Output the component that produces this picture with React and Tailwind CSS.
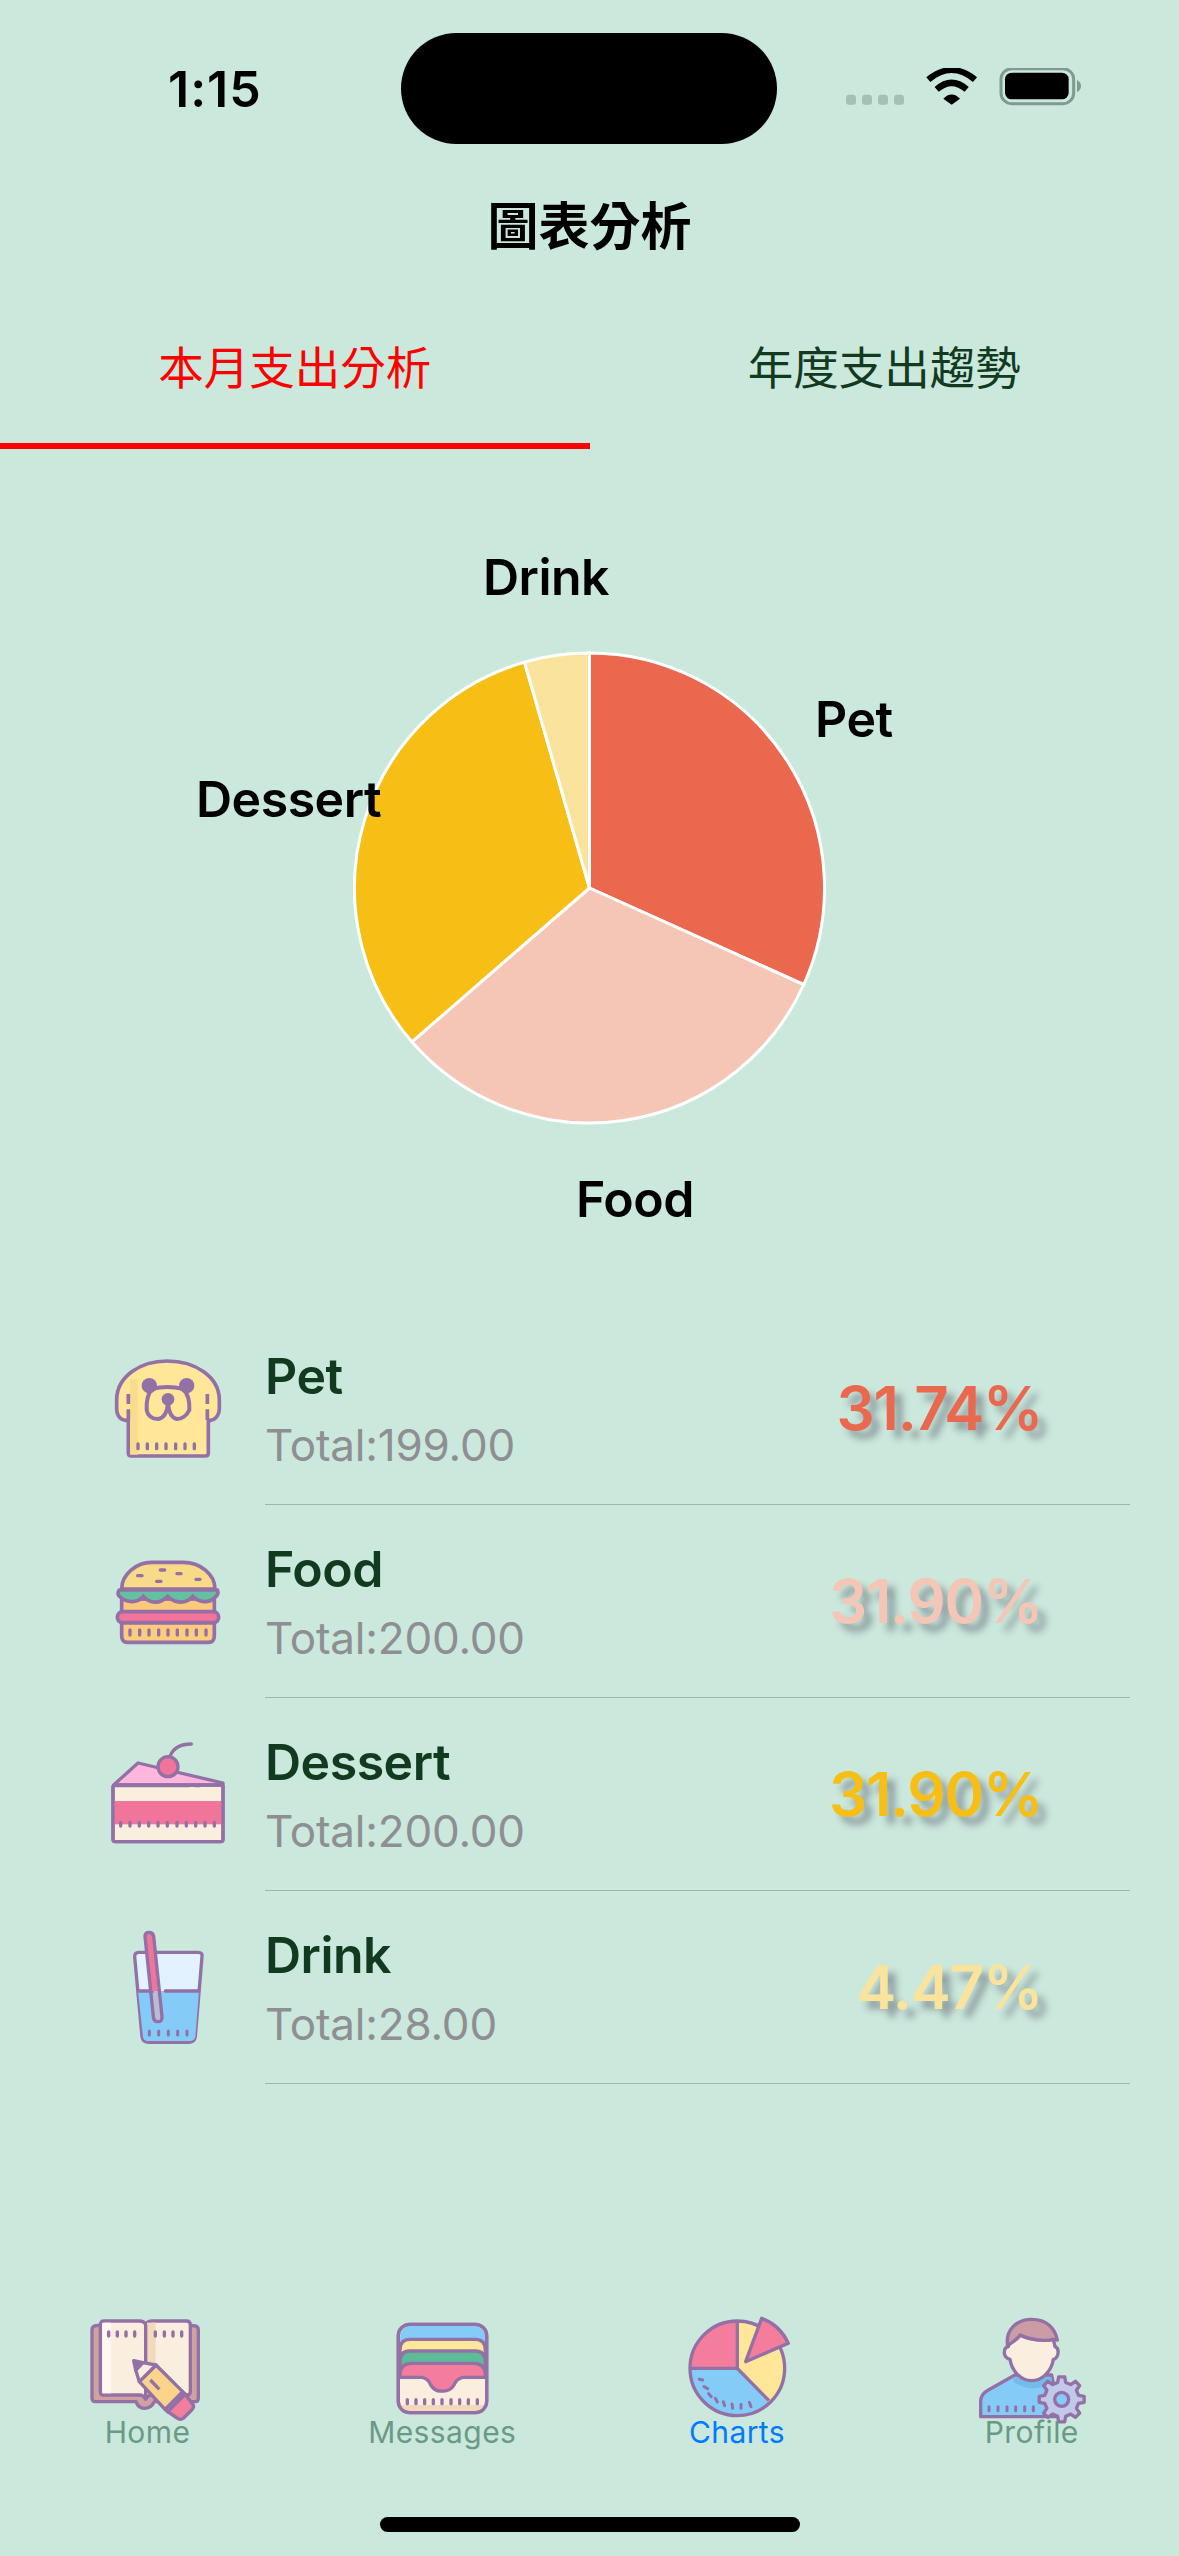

const P = "#9370a6";
const Y = "#ffe699";
const K = "#f47c9c";
const B = "#85cbf8";
const C = "#faefde";
const SANS = "font-['Inter','Noto_Sans_CJK_TC',sans-serif]";

function Dashes({ xs, y1, y2, w = 10 }) {
  return (
    <g stroke={P} strokeWidth={w} strokeLinecap="round">
      {xs.map((x) => (
        <line key={x} x1={x} x2={x} y1={y1} y2={y2} />
      ))}
    </g>
  );
}

function PetIcon() {
  return (
    <svg width="116" height="106" viewBox="90 108 348 318" fill="none" stroke={P} strokeWidth="11">
      <path fill={Y} d="M145 300C125 305 110 290 110 265L110 240C110 170 180 123 262 123C345 123 418 170 418 240L418 265C418 290 400 305 385 300L385 398Q385 408 375 408L155 408Q145 408 145 398Z" />
      <rect x="150" y="178" width="24" height="226" fill="#f8dd8e" stroke="none" />
      <path d="M145 222V252M145 268V300M382 222V252M382 268V300" />
      <path d="M215 207Q262 195 310 207Q330 228 328 270Q315 297 290 297Q268 292 264 250Q260 292 235 297Q205 297 200 270Q198 230 215 207Z" strokeWidth="12" />
      <circle cx="208" cy="197" r="23" fill={P} stroke="none" />
      <circle cx="320" cy="197" r="23" fill={P} stroke="none" />
      <circle cx="264" cy="238" r="19" fill={P} stroke="none" />
      <Dashes xs={[174, 202, 230, 258, 287, 315, 343]} y1={372} y2={386} />
    </svg>
  );
}

function FoodIcon() {
  return (
    <svg width="116" height="95" viewBox="90 70 348 285" fill="none" stroke={P} strokeWidth="11">
      <path fill="#f9da88" d="M125 175C125 130 170 95 215 95L310 95C360 95 405 130 405 175Z" />
      <g stroke={P} strokeWidth="10" strokeLinecap="round">
        <path d="M173 135H186M241 118H254M291 129H303M230 152H243M348 146H360" />
      </g>
      <rect x="125" y="205" width="278" height="42" fill="#fbc97c" />
      <path fill="#63c1a0" d="M118 178L412 178Q418 190 405 200C385 220 355 215 338 197C320 220 285 220 263 197C240 220 210 220 190 197C170 220 140 215 122 200Q108 190 118 178Z" />
      <path fill="#fbcd7d" d="M125 276L403 276L403 315Q403 335 385 335L143 335Q125 335 125 315Z" />
      <rect x="112" y="243" width="304" height="33" rx="16" fill="#f4739a" />
      <Dashes xs={[150, 179, 207, 236, 264, 292, 321, 349, 378]} y1={298} y2={313} />
    </svg>
  );
}

function CakeIcon() {
  return (
    <svg width="122" height="112" viewBox="82 120 366 336" fill="none" stroke={P} strokeWidth="10" strokeLinecap="round" strokeLinejoin="round">
      <path fill="#ffb6dd" d="M102 258L175 192L430 252V262H102Z" />
      <rect x="100" y="258" width="330" height="170" rx="7" fill={C} />
      <rect x="105" y="306" width="320" height="70" fill="#f1749a" stroke="none" />
      <rect x="100" y="258" width="330" height="170" rx="7" />
      <path d="M105 260H328M346 260H360" />
      <Dashes xs={[123, 151, 179, 207, 235, 263, 292, 320, 348, 376, 404]} y1={370} y2={381} />
      <path d="M272 170C280 150 300 135 335 135" />
      <circle cx="265" cy="203" r="30" fill="#f1749a" />
    </svg>
  );
}

function DrinkIcon() {
  return (
    <svg width="90" height="118" viewBox="128 682 270 354" fill="none" stroke={P} strokeWidth="10" strokeLinecap="round" strokeLinejoin="round">
      <path fill="#e2f2ff" d="M163 765Q163 752 175 752L353 752Q367 752 365 765L345 1005Q343 1022 325 1022L205 1022Q187 1022 185 1005Z" />
      <path fill={B} stroke="none" d="M173 868L356 868L345 1005Q343 1018 325 1018L205 1018Q189 1018 188 1005Z" />
      <path d="M175 868H235M255 868H355" />
      <path fill="#b9bdd4" d="M220 868L243 868L246 945Q246 960 233 960Q220 960 219 945Z" stroke="none" />
      <path fill="#f1749a" stroke="none" d="M194 704Q194 692 206 692Q218 692 220 704L232 868H212Z" />
      <path d="M194 704Q194 692 206 692Q218 692 220 704L245 945Q246 960 233 960Q220 960 219 945Z" />
      <Dashes xs={[207, 235, 264, 292, 320]} y1={988} y2={1000} w={9} />
    </svg>
  );
}

function HomeIcon() {
  return (
    <svg width="120" height="112" viewBox="81 75 360 336" fill="none" stroke={P} strokeWidth="10" strokeLinejoin="round" className="overflow-visible">
      <path fill="#cfa1a1" d="M110 106L100 108Q93 110 93 120L93 325Q93 335 103 335L225 335Q232 355 250 355Q270 355 280 335L403 335Q412 335 412 325L412 120Q412 110 403 108L390 106Z" />
      <path fill={C} d="M118 105Q118 93 130 93L235 93Q250 93 254 104Q258 93 275 93L376 93Q388 93 388 105L388 305Q388 315 378 315L275 315Q260 315 254 328Q248 315 235 315L128 315Q118 315 118 305Z" />
      <rect x="124" y="98" width="26" height="212" fill="#fff8f0" stroke="none" />
      <rect x="258" y="98" width="26" height="212" fill="#f3d9bb" stroke="none" />
      <path d="M254 104V328" />
      <Dashes xs={[143, 169, 195, 221, 283, 310, 336, 362]} y1={126} y2={138} />
      <path fill={K} d="M372 312L397 345Q400 352 392 360L368 384Q358 392 348 384L320 365Z" />
      <path fill="#b9c5e4" d="M365 305L372 312L320 365L312 358Z" />
      <path fill="#f9d48a" d="M285 225L365 305L312 358L235 275Z" />
      <path fill={C} d="M245 218L285 225L235 275L224 240Z" />
      <path fill={P} d="M218 212L246 218L224 240Z" />
      <path d="M268 270L295 298" />
    </svg>
  );
}

function MessagesIcon() {
  return (
    <svg width="120" height="112" viewBox="966 75 360 336" fill="none" stroke={P} strokeWidth="10" className="overflow-visible">
      <rect x="1015" y="103" width="265" height="265" rx="34" fill={C} />
      <path fill={B} d="M1020 150Q1020 107 1055 107L1240 107Q1276 107 1276 150V200H1020Z" stroke="none" />
      <path fill={Y} d="M1020 180Q1020 148 1050 148L1245 148Q1276 148 1276 180V230H1020Z" />
      <path fill="#5dbb97" d="M1020 215Q1020 183 1050 183L1245 183Q1276 183 1276 215V260H1020Z" />
      <path fill={K} d="M1020 255Q1020 220 1055 220L1240 220Q1276 220 1276 255V310H1020Z" />
      <path fill={C} stroke="none" d="M1020 264L1085 264Q1105 266 1112 285Q1125 305 1145 303Q1170 305 1182 285Q1190 266 1210 264L1276 264L1276 335Q1276 364 1245 364L1050 364Q1020 364 1020 335Z" />
      <path fill="#f3d9bb" stroke="none" d="M1020 345H1276Q1274 364 1245 364L1050 364Q1022 364 1020 345Z" />
      <path d="M1017 262L1085 262Q1105 265 1112 285Q1125 305 1145 303Q1170 305 1182 285Q1190 265 1210 262L1278 262" />
      <rect x="1015" y="103" width="265" height="265" rx="34" />
      <Dashes xs={[1042, 1068, 1094, 1120, 1146, 1173, 1199, 1225, 1252]} y1={329} y2={341} />
    </svg>
  );
}

function ChartsIcon() {
  return (
    <svg width="120" height="112" viewBox="111 75 360 336" fill="none" stroke={P} strokeWidth="10" strokeLinejoin="round" className="overflow-visible">
      <path fill={Y} d="M292 93A142 142 0 0 1 387 340L292 235Z" stroke="none" />
      <path fill={K} d="M150 235A142 142 0 0 1 292 93V235Z" stroke="none" />
      <path fill={B} d="M150 235H292L387 340A142 142 0 0 1 150 235Z" stroke="none" />
      <circle cx="292" cy="235" r="142" />
      <path d="M292 93V235H150M292 235L387 332" />
      <path fill={K} d="M317 215L365 85Q420 105 445 160Z" />
      <g stroke={P} strokeWidth="9" strokeLinecap="round">
        <path d="M178 268L188 270M192 290L203 296M206 311L214 320M226 325L232 336M250 335L254 347M276 342L278 355M303 343L303 355M328 337L333 350" />
      </g>
    </svg>
  );
}

function gearPath(cx, cy, r1, r2, n) {
  const pts = [];
  for (let i = 0; i < n; i++) {
    const a = (i / n) * Math.PI * 2;
    const s = (Math.PI * 2) / n;
    [[-0.3, r1], [-0.17, r2], [0.17, r2], [0.3, r1]].forEach(([f, r]) => {
      const t = a + f * s;
      pts.push(`${(cx + r * Math.cos(t)).toFixed(1)} ${(cy + r * Math.sin(t)).toFixed(1)}`);
    });
  }
  return "M" + pts.join("L") + "Z";
}

function ProfileIcon() {
  return (
    <svg width="120" height="112" viewBox="996 75 360 336" fill="none" stroke={P} strokeWidth="10" strokeLinejoin="round" className="overflow-visible">
      <path fill={B} d="M1022 380L1022 335Q1022 312 1045 300L1125 255L1235 255L1260 380Z" />
      <path fill="#74bbe8" stroke="none" d="M1120 262H1235V275Q1180 315 1120 275Z" />
      <path fill={C} d="M1105 160L1118 155C1125 150 1135 145 1140 135C1170 150 1215 155 1240 148L1245 170Q1258 175 1253 195Q1248 208 1240 208C1235 245 1205 272 1175 272C1145 272 1115 245 1110 208Q1095 205 1093 190Q1092 172 1105 170Z" />
      <path fill="#cb9ca3" d="M1103 168C1095 120 1130 88 1175 88C1220 88 1245 115 1252 150L1240 148C1215 155 1170 150 1140 135C1132 150 1115 155 1103 168Z" />
      <Dashes xs={[1047, 1074, 1101, 1127, 1154, 1180]} y1={350} y2={362} w={9} />
      <path fill="#c0c9e8" d={gearPath(1265, 328, 52, 68, 8)} />
      <circle cx="1265" cy="328" r="21" fill={B} />
    </svg>
  );
}

const rows = [
  { name: "Pet", total: "Total:199.00", pct: "31.74%", color: "text-[#ea694e]", Icon: PetIcon },
  { name: "Food", total: "Total:200.00", pct: "31.90%", color: "text-[#f5c6b6]", Icon: FoodIcon },
  { name: "Dessert", total: "Total:200.00", pct: "31.90%", color: "text-[#f7bf15]", Icon: CakeIcon },
  { name: "Drink", total: "Total:28.00", pct: "4.47%", color: "text-[#fae49d]", Icon: DrinkIcon },
];

const tabs = [
  { label: "Home", Icon: HomeIcon, color: "text-[#6a9a85]" },
  { label: "Messages", Icon: MessagesIcon, color: "text-[#6a9a85]" },
  { label: "Charts", Icon: ChartsIcon, color: "text-[#007aff]" },
  { label: "Profile", Icon: ProfileIcon, color: "text-[#6a9a85]" },
];

const slices = [
  { pct: 31.74, fill: "#ea694e" },
  { pct: 31.9, fill: "#f5c6b6" },
  { pct: 31.9, fill: "#f7bf15" },
  { pct: 4.46, fill: "#fae49d" },
];

function Pie() {
  const c = 240;
  const r = 235;
  let acc = 0;
  return (
    <svg width="480" height="480" viewBox="0 0 480 480" className="block -translate-x-[0.5px]">
      {slices.map((s) => {
        const a0 = (acc / 100) * 2 * Math.PI;
        acc += s.pct;
        const a1 = (acc / 100) * 2 * Math.PI;
        const x0 = c + r * Math.sin(a0);
        const y0 = c - r * Math.cos(a0);
        const x1 = c + r * Math.sin(a1);
        const y1 = c - r * Math.cos(a1);
        const large = a1 - a0 > Math.PI ? 1 : 0;
        return (
          <path
            key={s.fill}
            d={`M${c} ${c}L${x0} ${y0}A${r} ${r} 0 ${large} 1 ${x1} ${y1}Z`}
            fill={s.fill}
            stroke="#ffffff"
            strokeWidth="3"
          />
        );
      })}
    </svg>
  );
}

export default function App() {
  const label = "absolute text-[50px] leading-[60px] font-semibold text-black tracking-[-0.5px]";
  return (
    <div className={`w-[1179px] h-[2556px] bg-[#cbe8dc] flex flex-col overflow-hidden ${SANS}`}>
      {/* status bar */}
      <div className="flex items-center pt-[33px]">
        <div className="w-[401px] pl-[168px] text-[50px] leading-[60px] font-semibold text-black tracking-[1px]">1:15</div>
        <div className="w-[376px] h-[111px] rounded-[56px] bg-black" />
        <div className="flex-1 pl-[69px]">
          <svg width="240" height="42" viewBox="78 58 720 126" className="block">
            <g fill="#a4bfb4">
              <rect x="78" y="138" width="30" height="30" rx="9" />
              <rect x="126" y="138" width="30" height="30" rx="9" />
              <rect x="174" y="138" width="30" height="30" rx="9" />
              <rect x="222" y="138" width="30" height="30" rx="9" />
            </g>
            <g fill="none" stroke="#000">
              <path d="M325 93C370 55 420 55 465 93" strokeWidth="19" />
              <path d="M350 122C380 96 410 96 440 122" strokeWidth="19" />
            </g>
            <path d="M370 150C385 133 405 133 420 150L395 168Z" fill="#000" />
            <rect x="543" y="60" width="218" height="105" rx="32" fill="none" stroke="#7f9a90" strokeWidth="9" />
            <rect x="555" y="72" width="191" height="80" rx="20" fill="#000" />
            <path d="M771 94Q783 100 783 112Q783 124 771 130Z" fill="#7f9a90" />
          </svg>
        </div>
      </div>

      {/* title */}
      <div className="mt-[53px] text-center text-[51px] leading-[60px] font-semibold text-black">圖表分析</div>

      {/* tabs */}
      <div className="mt-[55px] flex h-[137px]">
        <div className="flex-1 flex items-center justify-center pb-[16px] border-b-[6px] border-[#ff0000] text-[45.5px] text-[#ff0000]">本月支出分析</div>
        <div className="flex-1 flex items-center justify-center pb-[22px] text-[45.5px] text-[#123a1f]">年度支出趨勢</div>
      </div>

      {/* chart */}
      <div className="relative h-[863px] flex justify-center pt-[199px]">
        <Pie />
        <div className={`${label} left-[483px] top-[98px]`}>Drink</div>
        <div className={`${label} left-[815px] top-[240px]`}>Pet</div>
        <div className={`${label} left-[196px] top-[320px]`}>Dessert</div>
        <div className={`${label} left-[576px] top-[720px]`}>Food</div>
      </div>

      {/* list */}
      <div className="flex flex-col">
        {rows.map(({ name, total, pct, color, Icon }) => (
          <div key={name + pct} className="flex h-[193px] pl-[71px] pr-[49px]">
            <div className="w-[194px] flex items-center justify-center">
              <Icon />
            </div>
            <div className="flex-1 flex justify-between items-center border-b border-[#a0b5ae] pr-[88px]">
              <div className="self-start pt-[34px]">
                <div className="text-[50px] leading-[60px] font-semibold text-[#123a1f] tracking-[-0.5px]">{name}</div>
                <div className="mt-[12px] text-[44px] leading-[54px] text-[#8e8e93] tracking-[-0.2px]">{total}</div>
              </div>
              <div className={`text-[60px] leading-[72px] font-semibold tracking-[-1.2px] ${color} [text-shadow:8px_8px_7px_rgba(60,60,80,0.42)]`}>{pct}</div>
            </div>
          </div>
        ))}
      </div>

      {/* tab bar */}
      <div className="mt-auto grid grid-cols-4">
        {tabs.map(({ label: l, Icon, color }) => (
          <div key={l} className="w-[295px] flex flex-col items-center">
            <Icon />
            <div className={`relative -mt-[13px] text-[30px] leading-[36px] tracking-[0.4px] ${color}`}>{l}</div>
          </div>
        ))}
      </div>
      <div className="mt-[67px] mb-[24px] flex justify-center">
        <div className="w-[420px] h-[15px] rounded-full bg-black" />
      </div>
    </div>
  );
}
